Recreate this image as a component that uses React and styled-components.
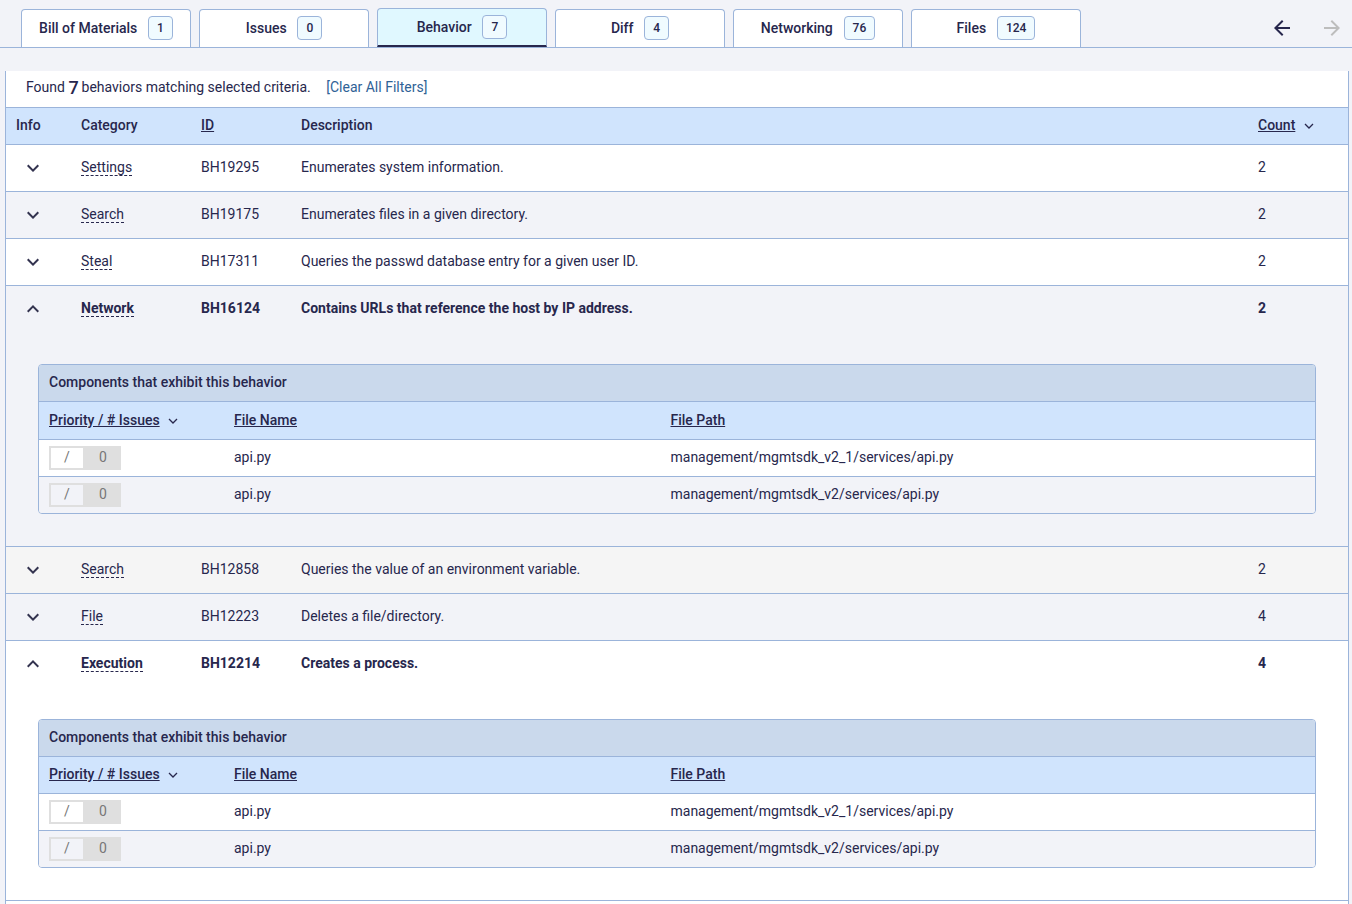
import React from "react";
import styled, { createGlobalStyle } from "styled-components";

const line = "#9bb4da";
const ink = "#27274d";

const Global = createGlobalStyle`
  html, body { margin: 0; height: 904px; overflow: hidden; background: #f2f3f8; }
  body { font-family: Roboto, "Liberation Sans", sans-serif; font-size: 14px; color: ${ink}; }
  * { box-sizing: border-box; }
`;

const TabBar = styled.div`
  display: flex; align-items: flex-end; gap: 8px; height: 48px; padding: 0 8px 0 21px;
  border-bottom: 1px solid ${line};
`;
const Tab = styled.div`
  width: 170px; height: ${p => (p.$active ? 39 : 38)}px;
  display: flex; align-items: center; justify-content: center; gap: 10.8px;
  background: ${p => (p.$active ? "#e0f8ff" : "#fff")};
  border: 1px solid ${line}; border-bottom: ${p => (p.$active ? `2px solid ${ink}` : "none")};
  border-radius: 4px 4px 0 0; font-weight: 500;
  padding-bottom: ${p => (p.$active ? 0 : 1)}px;
`;
const Badge = styled.span`
  height: 24px; padding: 0 8px; display: flex; align-items: center;
  border: 1px solid ${line}; border-radius: 4px; background: #f0fbff; font-size: 12px;
`;
const Arrows = styled.div`
  margin-left: auto; display: flex; gap: 26px; align-self: flex-start; padding-top: 16px;
`;
const ArrowIcon = styled.svg`
  width: 24px; height: 24px; fill: ${p => (p.$muted ? "#bdbdbd" : ink)}; display: block;
`;
const Panel = styled.div`
  margin: 23px 3px 0 5px; background: #fff;
  border-left: 1px solid ${line}; border-right: 1px solid ${line};
`;
const Found = styled.div`
  height: 36px; padding: 0 0 4px 20px; display: flex; align-items: center; white-space: pre;
`;
const Num = styled.b`
  font-size: 18px; font-weight: 500; margin-right: -0.6px;
`;
const Clear = styled.span`
  color: #2f6296; margin-left: 15.5px;
`;
const cols = "65px 120px 100px 1fr 100px";
const HeadRow = styled.div`
  display: grid; grid-template-columns: ${cols}; align-items: center; height: 38px; padding-bottom: 2px;
  background: #d0e4fd; border-top: 1px solid ${line}; border-bottom: 1px solid ${line}; font-weight: 500;
`;
const Cell = styled.div`
  padding: 0 10px; display: flex; align-items: center;
`;
const SortLink = styled.span`
  text-decoration: underline;
`;
const SmallChevron = styled.svg`
  width: 10px; height: 6px; margin-left: 8.5px; margin-top: 2px; fill: none;
  stroke: ${ink}; stroke-width: 1.3; flex: none;
`;
const Row = styled.div`
  background: ${p => p.$bg}; border-bottom: 1px solid ${line};
`;
const RowMain = styled.div`
  display: grid; grid-template-columns: ${cols}; align-items: center; height: 46px; padding-bottom: 2px;
  font-weight: ${p => (p.$open ? 700 : 400)};
`;
const ChevronIcon = styled.svg`
  width: 24px; height: 24px; fill: #33334f; display: block; margin: 2px 0 0 5px;
`;
const Dashed = styled.span`
  border-bottom: 1px dashed ${ink};
`;
const Detail = styled.div`
  padding: 32px;
`;
const Box = styled.div`
  border: 1px solid ${line}; border-radius: 4px; overflow: hidden;
`;
const BoxTitle = styled.div`
  height: 37px; padding: 0 10px 2px; display: flex; align-items: center; background: #cad9ec;
  border-bottom: 1px solid ${line}; font-weight: 500;
`;
const innerCols = "185px 436.5px 1fr";
const BoxHead = styled.div`
  display: grid; grid-template-columns: ${innerCols}; align-items: center;
  height: ${p => (p.$tall ? 38 : 37)}px; padding: 0 0 ${p => (p.$tall ? 1 : 2)}px 10px;
  background: #d0e4fd; border-bottom: 1px solid ${line}; font-weight: 500;
`;
const BoxRow = styled.div`
  display: grid; grid-template-columns: ${innerCols}; align-items: center; height: 37px; padding-left: 10px;
  background: ${p => (p.$alt ? "#f2f3f8" : "#fff")};
  &:not(:last-child) { border-bottom: 1px solid ${line}; }
  &:last-child { height: 36px; }
`;
const BoxText = styled.div`
  padding-bottom: 2px;
`;
const Inline = styled.div`
  display: flex; align-items: center;
`;
const Priority = styled.div`
  width: 72px; height: 24px; display: flex; background: #dfdfdf; padding: 2px 0 2px 2px; color: #777;
`;
const PriorityInner = styled.span`
  width: 32px; display: flex; align-items: center; justify-content: center; padding-bottom: 2px;
  background: ${p => (p.$alt ? "#f2f3f8" : "#fff")};
`;
const PriorityCount = styled.span`
  flex: 1; display: flex; align-items: center; justify-content: center; padding: 0 0 2px 2px;
`;

const down = "M16.59 8.59 12 13.17 7.41 8.59 6 10l6 6 6-6z";
const up = "M12 8l-6 6 1.41 1.41L12 10.83l4.59 4.58L18 14z";

const Sort = () => (
  <SmallChevron viewBox="0 0 10 6"><polyline points="1,1 5,5 9,1" /></SmallChevron>
);

const Components = ({ tall }) => (
  <Detail>
    <Box>
      <BoxTitle>Components that exhibit this behavior</BoxTitle>
      <BoxHead $tall={tall}>
        <Inline><SortLink>Priority / # Issues</SortLink><Sort /></Inline>
        <div><SortLink>File Name</SortLink></div>
        <div><SortLink>File Path</SortLink></div>
      </BoxHead>
      {["management/mgmtsdk_v2_1/services/api.py", "management/mgmtsdk_v2/services/api.py"].map((path, i) => (
        <BoxRow key={path} $alt={i === 1}>
          <Priority>
            <PriorityInner $alt={i === 1}>/</PriorityInner>
            <PriorityCount>0</PriorityCount>
          </Priority>
          <BoxText>api.py</BoxText>
          <BoxText>{path}</BoxText>
        </BoxRow>
      ))}
    </Box>
  </Detail>
);

const tabs = [
  ["Bill of Materials", 1], ["Issues", 0], ["Behavior", 7], ["Diff", 4], ["Networking", 76], ["Files", 124],
];
const rows = [
  ["Settings", "BH19295", "Enumerates system information.", 2, "#fff"],
  ["Search", "BH19175", "Enumerates files in a given directory.", 2, "#f2f3f8"],
  ["Steal", "BH17311", "Queries the passwd database entry for a given user ID.", 2, "#fff"],
  ["Network", "BH16124", "Contains URLs that reference the host by IP address.", 2, "#f2f3f8", true],
  ["Search", "BH12858", "Queries the value of an environment variable.", 2, "#f5f5f5"],
  ["File", "BH12223", "Deletes a file/directory.", 4, "#f2f3f8"],
  ["Execution", "BH12214", "Creates a process.", 4, "#fff", true],
];

export default function App() {
  return (
    <>
      <Global />
      <TabBar>
        {tabs.map(([name, n]) => (
          <Tab key={name} $active={name === "Behavior"}>{name}<Badge>{n}</Badge></Tab>
        ))}
        <Arrows>
          <ArrowIcon viewBox="0 0 24 24"><path d="M20 11H7.83l5.59-5.59L12 4l-8 8 8 8 1.41-1.41L7.83 13H20v-2z" /></ArrowIcon>
          <ArrowIcon $muted viewBox="0 0 24 24"><path d="M12 4l-1.41 1.41L16.17 11H4v2h12.17l-5.58 5.59L12 20l8-8z" /></ArrowIcon>
        </Arrows>
      </TabBar>
      <Panel>
        <Found>Found <Num>7</Num> behaviors matching selected criteria.<Clear>[Clear All Filters]</Clear></Found>
        <HeadRow>
          <Cell>Info</Cell>
          <Cell>Category</Cell>
          <Cell><SortLink>ID</SortLink></Cell>
          <Cell>Description</Cell>
          <Cell><SortLink>Count</SortLink><Sort /></Cell>
        </HeadRow>
        {rows.map(([cat, id, desc, count, bg, open]) => (
          <Row key={id} $bg={bg}>
            <RowMain $open={open}>
              <Cell><ChevronIcon viewBox="0 0 24 24"><path d={open ? up : down} /></ChevronIcon></Cell>
              <Cell><Dashed>{cat}</Dashed></Cell>
              <Cell>{id}</Cell>
              <Cell>{desc}</Cell>
              <Cell>{count}</Cell>
            </RowMain>
            {open && <Components tall={id === "BH16124"} />}
          </Row>
        ))}
        <Row $bg="#fff"><RowMain /></Row>
      </Panel>
    </>
  );
}
